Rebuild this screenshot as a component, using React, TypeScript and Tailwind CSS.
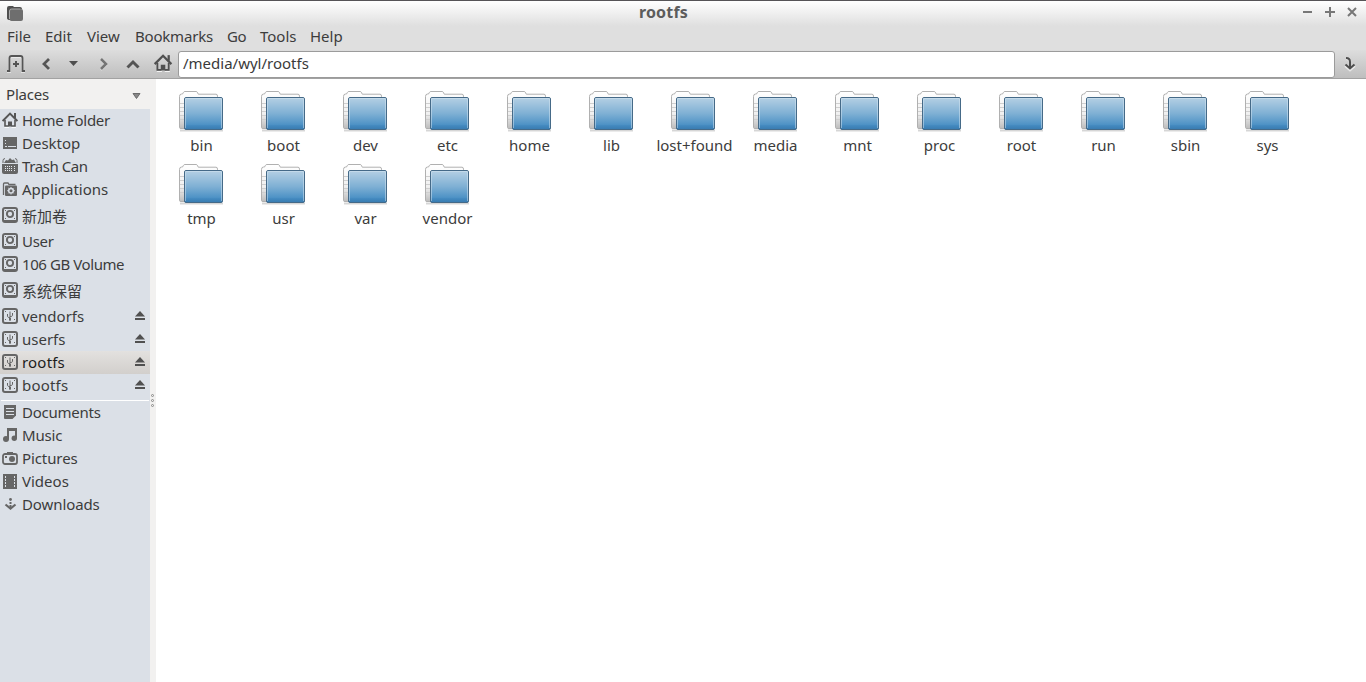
import React from "react";

const INK = "#666666";

type IconProps = { children: React.ReactNode; w?: number; h?: number; className?: string; crisp?: boolean };

function Svg({ children, w = 16, h = 16, className = "", crisp = false }: IconProps) {
  return (
    <svg
      width={w}
      height={h}
      viewBox={`0 0 ${w} ${h}`}
      fill="none"
      className={`block shrink-0 ${className}`}
      shapeRendering={crisp ? "crispEdges" : "auto"}
    >
      {children}
    </svg>
  );
}

function HomeShape({ color }: { color: string }) {
  return (
    <>
      <path d="M2.500 15.500H7M9.500 15.500H14" stroke="#ffffff" strokeOpacity=".8" />
      <path d="M3 8v6h3.500M9.500 14H13V8" stroke={color} strokeWidth="1.600" />
      <path d="M6 14.500V9.500h4v5z" fill={color} />
      <path d="M.6 9 8 1.600 15.400 9" stroke={color} strokeWidth="2" />
      <path d="M12 1h2v5h-2z" fill={color} />
    </>
  );
}

function HomeIcon() {
  return (
    <Svg>
      <HomeShape color="#555555" />
    </Svg>
  );
}

function DesktopIcon() {
  return (
    <Svg crisp>
      <rect x="1" y="2" width="14" height="12" rx="1" fill={INK} />
      <path d="M3 5h1v1H3zM3 8h1v1H3zM3 11h2v1H3zM6 11h8v1H6z" fill="#dbe0e7" />
    </Svg>
  );
}

function TrashIcon() {
  return (
    <Svg>
      <path d="M1 5V2.5Q1 .6 3 .6M15 5V2.5Q15 .6 13 .6" stroke={INK} />
      <path d="M2 5 4 2l2 .5L8 0l2 2 2-.5L14 5z" fill={INK} />
      <path d="M0 6h16v8q0 2-2 2H2q-2 0-2-2z" fill={INK} />
      <path
        shapeRendering="crispEdges"
        d="M3 8h1v1H3zM5 8h1v1H5zM7 8h1v1H7zM9 8h1v1H9zM12 8h1v1h-1zM3 10h1v1H3zM5 10h1v1H5zM7 10h1v1H7zM9 10h1v1H9zM12 10h1v1h-1zM3 12h1v1H3zM5 12h1v1H5zM7 12h1v1H7zM9 12h1v1H9zM12 12h1v1h-1z"
        fill="#e7eaee"
      />
    </Svg>
  );
}

function AppsIcon() {
  return (
    <Svg>
      <path d="M1.5 14V3q0-1 1-1H6l1 1.5h6.500" stroke={INK} strokeWidth="1.300" />
      <rect x="3" y="4.500" width="12" height="10.500" rx="1" fill={INK} />
      <circle cx="9" cy="9.700" r="2.300" stroke="#dbe0e7" strokeWidth="1.500" />
      <path d="M9 6v1M9 12.500v1M5.200 9.700h1M11.800 9.700h1M6.400 7.100l.6.6M11.600 7.100l-.6.6M6.400 12.300l.6-.6M11.600 12.300l-.6-.6" stroke="#dbe0e7" />
    </Svg>
  );
}

function DriveFrame() {
  return (
    <>
      <rect x="1" y="1" width="14" height="14" rx="2" stroke={INK} strokeWidth="2" />
      <path shapeRendering="crispEdges" d="M3 3h1v1H3zM12 3h1v1h-1zM3 11h1v1H3zM12 11h1v1h-1z" fill={INK} />
    </>
  );
}

function DiskIcon() {
  return (
    <Svg>
      <DriveFrame />
      <circle cx="8" cy="7" r="3.100" stroke={INK} strokeWidth="1.900" />
      <path d="M2 13.500h12" stroke={INK} />
    </Svg>
  );
}

function UsbIcon() {
  return (
    <Svg>
      <DriveFrame />
      <path d="M8 3.500v9M5.500 6v2.500q0 1 2.500 1M10.500 5v2.500q0 1-2.500 1" stroke={INK} />
      <path d="M7 10h2v2.500H7z" fill={INK} />
    </Svg>
  );
}

function DocIcon() {
  return (
    <Svg>
      <path d="M2 1h12v10.5L10.5 15H3q-1 0-1-1z" fill={INK} />
      <path shapeRendering="crispEdges" d="M4 4h8v1H4zM4 7h8v1H4zM4 10h8v1H4z" fill="#dbe0e7" />
    </Svg>
  );
}

function MusicIcon() {
  return (
    <Svg>
      <path d="M6 12V2h8v9" stroke={INK} strokeWidth="2" />
      <path d="M5 1h10v3H5z" fill={INK} />
      <circle cx="4" cy="12" r="3" fill={INK} />
      <circle cx="12.300" cy="11.300" r="2.700" fill={INK} />
    </Svg>
  );
}

function PicturesIcon() {
  return (
    <Svg>
      <rect x="1" y="4" width="14" height="10" rx="2" stroke={INK} strokeWidth="1.8" />
      <path d="M5 2h6v2H5z" fill={INK} />
      <circle cx="10" cy="9" r="3" fill={INK} />
      <path d="M3 6h2v2H3z" fill={INK} />
    </Svg>
  );
}

function VideosIcon() {
  return (
    <Svg crisp>
      <path d="M1 1h14v15H1z" fill={INK} />
      <path d="M3 3h1v2H3zM3 6h1v2H3zM3 9h1v2H3zM3 12h1v2H3zM12 3h1v2h-1zM12 6h1v2h-1zM12 9h1v2h-1zM12 12h1v2h-1z" fill="#dbe0e7" />
    </Svg>
  );
}

function DownloadsIcon() {
  return (
    <Svg>
      <path d="M3.500 8.500 8.500 12.500l5-4" stroke={INK} strokeWidth="2.200" />
      <circle cx="8.500" cy="3.500" r="1.400" fill={INK} />
      <path d="M7.500 6h2v2h-2zM7.500 9h2v3h-2z" fill={INK} />
    </Svg>
  );
}

function EjectIcon() {
  return (
    <Svg w={10} h={9}>
      <path d="M5 0 10 5.5H0z" fill="#505050" />
      <path d="M0 7h10v2H0z" fill="#505050" />
    </Svg>
  );
}

function FolderIcon() {
  return (
    <Svg w={48} h={44}>
      <defs>
        <linearGradient id="front" x1="0" y1="0" x2="0" y2="1">
          <stop offset="0" stopColor="#b5d0e4" />
          <stop offset=".5" stopColor="#7fb0d4" />
          <stop offset=".84" stopColor="#4f93c6" />
          <stop offset=".88" stopColor="#4389bf" />
          <stop offset="1" stopColor="#387bb0" />
        </linearGradient>
        <linearGradient id="back" x1="0" y1="0" x2="0" y2="1">
          <stop offset="0" stopColor="#ffffff" />
          <stop offset=".6" stopColor="#f0f0f0" />
          <stop offset="1" stopColor="#bdbdbd" />
        </linearGradient>
      </defs>
      <path d="M2 40.500h43" stroke="#000" strokeOpacity=".16" strokeWidth="2" />
      <path
        d="M1.500 37.500V6.500q0-2.500 2-2.500h1L5.500 2.300q.4-.8 1.300-.8H18q1 0 1.300.7l1 2H38q1.500 0 1.500 2V38.500H3q-1.500 0-1.500-1z"
        fill="url(#back)"
        stroke="#b0b0b0"
      />
      <path d="M2 13.500h4M2 17.500h4M2 21.500h4M2 25.500h4M2 29.500h4M2 33.500h4" stroke="#cfcfcf" />
      <rect x="6.500" y="7.500" width="38" height="32" rx="1.500" fill="url(#front)" stroke="#456a88" />
      <path d="M7.500 38V8.500h36V38" stroke="#d6e6f2" strokeOpacity=".5" />
    </Svg>
  );
}

type Place = {
  label: string;
  icon: () => React.ReactElement;
  tracking?: string;
  cjk?: boolean;
  eject?: boolean;
  selected?: boolean;
};

const places: Place[] = [
  { label: "Home Folder", icon: HomeIcon, tracking: "tracking-[-0.3px]" },
  { label: "Desktop", icon: DesktopIcon },
  { label: "Trash Can", icon: TrashIcon, tracking: "tracking-[-0.42px]" },
  { label: "Applications", icon: AppsIcon },
  { label: "新加卷", icon: DiskIcon, cjk: true },
  { label: "User", icon: DiskIcon, tracking: "tracking-[-0.3px]" },
  { label: "106 GB Volume", icon: DiskIcon, tracking: "tracking-[-0.42px]" },
  { label: "系统保留", icon: DiskIcon, cjk: true },
  { label: "vendorfs", icon: UsbIcon, eject: true },
  { label: "userfs", icon: UsbIcon, eject: true },
  { label: "rootfs", icon: UsbIcon, eject: true, selected: true, tracking: "tracking-[0.2px]" },
  { label: "bootfs", icon: UsbIcon, eject: true, tracking: "tracking-[0.2px]" },
];

const bookmarks: Place[] = [
  { label: "Documents", icon: DocIcon, tracking: "tracking-[-0.25px]" },
  { label: "Music", icon: MusicIcon, tracking: "tracking-[-0.15px]" },
  { label: "Pictures", icon: PicturesIcon, tracking: "tracking-[-0.1px]" },
  { label: "Videos", icon: VideosIcon },
  { label: "Downloads", icon: DownloadsIcon, tracking: "tracking-[-0.1px]" },
];

const folders = [
  "bin", "boot", "dev", "etc", "home", "lib", "lost+found", "media", "mnt",
  "proc", "root", "run", "sbin", "sys", "tmp", "usr", "var", "vendor",
];

const menus = [
  { label: "File", width: "w-[38px]" },
  { label: "Edit", width: "w-[42px]" },
  { label: "View", width: "w-12" },
  { label: "Bookmarks", width: "w-[92px] tracking-[-0.2px]" },
  { label: "Go", width: "w-[33px] tracking-[-0.5px]" },
  { label: "Tools", width: "w-[50px]" },
  { label: "Help", width: "w-10" },
];

function PlaceRow({ place }: { place: Place }) {
  const Icon = place.icon;
  return (
    <li
      className={`flex items-center pl-[2px] pr-[5px] ${place.cjk ? "h-[29px]" : "h-[23px]"} ${
        place.selected ? "bg-linear-to-b from-[#e3e1df] to-[#d2cfcc] text-[#1c1c1c]" : ""
      }`}
    >
      <div className={place.cjk ? "pb-[2px]" : "pb-[1px]"}>
        <Icon />
      </div>
      <span className={`ml-1 grow whitespace-nowrap ${place.cjk ? "" : "pb-[1px]"} ${place.tracking ?? ""}`}>
        {place.label}
      </span>
      {place.eject && (
        <div className="pb-[3px]">
          <EjectIcon />
        </div>
      )}
    </li>
  );
}

function TitleBar() {
  return (
    <header className="flex h-[26px] items-start border-t border-[#565457] bg-linear-to-b from-white to-[#dfdfdf] pl-[7px] pr-[9px]">
      <Svg w={16} h={16} className="mt-1">
        <path d="M0 3q0-2 2-2h4l1 1h6q2 0 2 2H5Q3 4.500 3 6.500V15Q0 15 0 13z" fill="#4f4f4f" />
        <rect x="2.500" y="4" width="13.500" height="12" rx="2" fill="#6e6e6e" />
        <path d="M2.500 14V6q0-2 2-2h9" stroke="#aaa" />
      </Svg>
      <h1 className="mt-px grow pl-px text-center text-base leading-5 font-bold tracking-[0.2px] text-[#5c5c5c]">rootfs</h1>
      <Svg w={54} h={12} className="mt-[5px]">
        <path d="M0 6h9" stroke="#777" strokeWidth="2" />
        <path d="M22 6h10M27 1v10" stroke="#777" strokeWidth="2" />
        <path d="m45 2 8 8M53 2l-8 8" stroke="#777" strokeWidth="2" />
      </Svg>
    </header>
  );
}

function Toolbar() {
  return (
    <div className="flex h-[29px] items-center border-b border-[#a2a2a2] bg-linear-to-b from-[#dddddd] to-[#bebebe]">
      <Svg w={178} h={28}>
        <g stroke="#fff" strokeOpacity=".5" strokeWidth="2" transform="translate(0 1)">
          <path d="M7 21h3V8q0-2 2-2h8q2 0 2 2v13h3" />
          <path d="m49 9-5 5 5 5M101 9l5 5-5 5M128 17l5-5 5 5" />
        </g>
        <g stroke="#555" strokeWidth="2">
          <path d="M7 21h2.500V8q0-2 2-2h9q2 0 2 2v13H25" strokeWidth="1.800" />
          <path d="M13 14h6M16 11v6" />
          <path d="m49 9-5 5 5 5" strokeWidth="2.800" />
          <path d="m101 9 5 5-5 5" stroke="#747474" strokeWidth="2.500" />
          <path d="m127.500 17.500 5.500-5.500 5.500 5.500" strokeWidth="3" />
        </g>
        <path d="M69 11h9l-4.500 5z" fill="#4e4e4e" />
        <g transform="translate(154 4) scale(1.130)">
          <HomeShape color="#505050" />
        </g>
      </Svg>
      <div className="flex h-[27px] grow items-center rounded-[3px] border border-[#9b9b9b] bg-white pb-[2px] pl-1 text-[#3a3a3a]">
        /media/wyl/rootfs
      </div>
      <Svg w={31} h={28}>
        <path d="m10 16 5 4.500 5-4.500M11 9q4 0 4 4v7" stroke="#fff" strokeOpacity=".6" strokeWidth="2" />
        <path d="m10.500 14.500 4.500 4 4.500-4M11 8q4 0 4 4v6" stroke="#4e4e4e" strokeWidth="2" />
      </Svg>
    </div>
  );
}

export default function App() {
  return (
    <div className="flex h-[682px] w-[1366px] flex-col overflow-hidden bg-white font-['Noto_Sans','Noto_Sans_CJK_SC',sans-serif] text-[15px] leading-5 text-[#3c3c3c]">
      <TitleBar />
      <nav className="flex h-6 items-center bg-[#dfdfdf] pb-1 pl-[7px]">
        {menus.map((m) => (
          <span key={m.label} className={`whitespace-nowrap ${m.width}`}>
            {m.label}
          </span>
        ))}
      </nav>
      <Toolbar />
      <div className="flex min-h-0 grow">
        <aside className="flex w-[150px] shrink-0 flex-col bg-[#dbe0e7]">
          <div className="flex h-[30px] shrink-0 items-center justify-between bg-[#f2f1f0] pr-[9px] pl-[6px]">
            <span className="tracking-[-0.2px]">Places</span>
            <Svg w={9} h={6} className="mt-[3px]">
              <path d="M1 .5h7L4.500 5.500z" fill="#888" stroke="#6b6b6b" />
            </Svg>
          </div>
          <ul>
            {places.map((p) => (
              <PlaceRow key={p.label} place={p} />
            ))}
          </ul>
          <div className="mx-px mt-[3px] h-px shrink-0 bg-white" />
          <ul>
            {bookmarks.map((p) => (
              <PlaceRow key={p.label} place={p} />
            ))}
          </ul>
        </aside>
        <div className="flex w-[6px] shrink-0 flex-col items-center gap-[2px] bg-[#f2f1f0] pt-[315px] pr-px">
          <i className="size-[3px] rounded-full border border-[#888]" />
          <i className="size-[3px] rounded-full border border-[#888]" />
          <i className="size-[3px] rounded-full border border-[#888]" />
        </div>
        <main className="grid grow grid-cols-[repeat(14,82px)] content-start pt-[11px] pl-1">
          {folders.map((f) => (
            <div key={f} className="flex h-[73px] flex-col items-center">
              <div className="pl-[2px]">
                <FolderIcon />
              </div>
              <span className={`mt-px whitespace-nowrap ${f === "lost+found" ? "pl-[3px]" : "pl-px"}`}>{f}</span>
            </div>
          ))}
        </main>
      </div>
    </div>
  );
}
